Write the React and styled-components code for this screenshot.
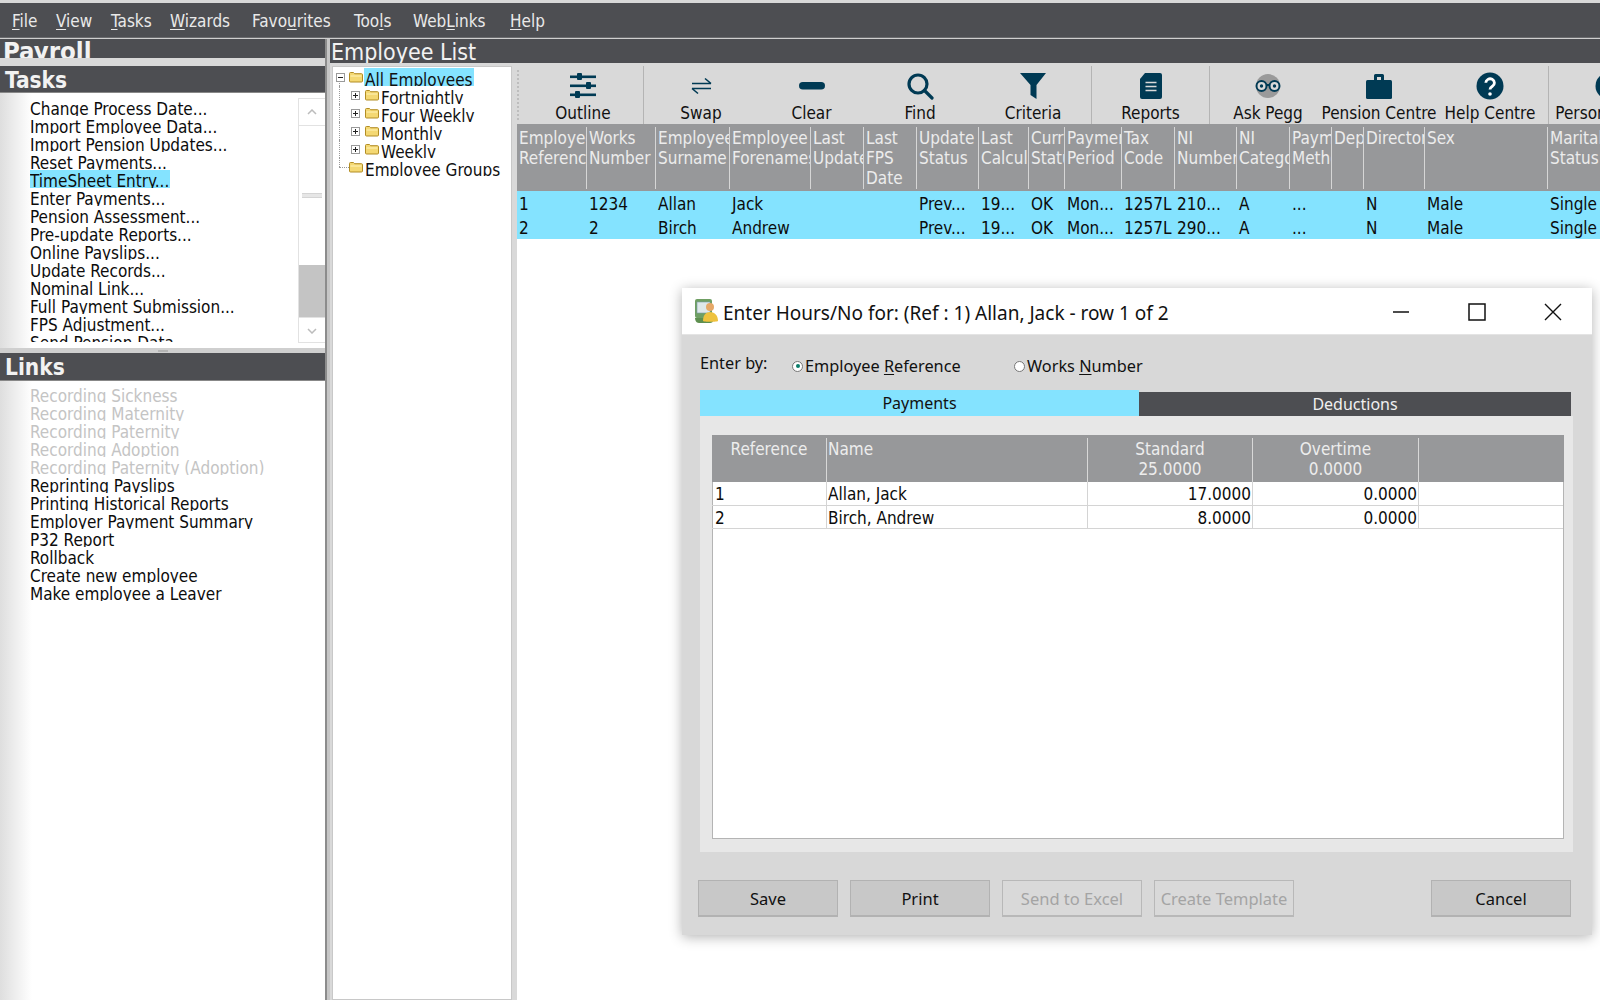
import React from "react";
import styled, { createGlobalStyle } from "styled-components";

const ink = "#003a54";
const dark = "#4d4e52";
const cyan = "#84e3ff";
const head = "#97989a";
const tahoma = `"DejaVu Sans Condensed", "DejaVu Sans", sans-serif`;
const segoe = `"Noto Sans", "Open Sans", sans-serif`;

const Global = createGlobalStyle`
  html, body { margin: 0; padding: 0; background: #fff; }
  * { box-sizing: border-box; }
  #root { width: 1600px; height: 1000px; overflow: hidden; }
`;

const Page = styled.div`
  position: relative; width: 1600px; height: 1000px; overflow: hidden;
  display: flex; flex-direction: column;
  font-family: ${tahoma}; font-size: 17px; color: #111; padding-top: 3px;
  background-color: #d8d8d8;
`;
const MenuBar = styled.div`
  height: 35px; flex: none; background: ${dark}; position: relative; padding-top: 1px;
  border-bottom: 1px solid #6a6b6e; color: #e9e9e9; display: flex; align-items: center;
`;
const MenuItem = styled.span`
  width: ${p => p.$w}px; font-size: 17px; white-space: nowrap;
  &:first-child { margin-left: 12px; }
  u { text-underline-offset: 2px; text-decoration-thickness: 1px; }
`;
const Main = styled.div`
  flex: 1; display: flex; min-height: 0; padding-top: 1px; background: #cfcfcf;
`;
const Sidebar = styled.div`
  width: 325px; flex: none; display: flex; flex-direction: column; min-height: 0;
`;
const TitleBar = styled.div`
  height: 19px; flex: none; background: ${dark}; color: #f2f2f2; overflow: hidden;
  font: bold 25.5px/24px ${tahoma}; padding-left: 3px;
`;
const Band = styled.div`height: 8px; flex: none; background: #d9d9d9;`;
const SectionHead = styled.div`
  height: ${p => p.$h}px; flex: none; background: ${dark}; color: #f2f2f2;
  font: bold 22.5px/29px ${tahoma}; padding-left: 5px; border-bottom: 1px solid #888; overflow: hidden;
`;
const ListWrap = styled.div`
  flex: ${p => (p.$grow ? 1 : "none")}; height: ${p => (p.$grow ? "auto" : "255px")};
  background: linear-gradient(90deg, #dedede, #fff 32px); display: flex; padding-top: ${p => p.$pt}px; min-height: 0;
`;
const List = styled.div`
  flex: 1; padding-left: 30px; height: ${p => p.$h}px; overflow: hidden;
`;
const Row = styled.div`
  height: 18px; overflow: hidden; font-size: 17px; line-height: 22px; white-space: nowrap;
  color: ${p => (p.$off ? "#c4c4c4" : "#0c0c0c")};
  span { display: inline-block; padding: 0 1px; background: ${p => (p.$on ? cyan : "transparent")}; margin-left: -1px; }
`;
const Scrollbar = styled.div`
  width: 27px; flex: none; height: 245px; border: 1px solid #e2e2e2; border-right: 0;
  display: flex; flex-direction: column; background: #fff;
`;
const ScrollBtn = styled.div`
  height: 27px; flex: none; display: flex; align-items: center; justify-content: center;
  border-bottom: ${p => (p.$top ? "1px solid #e2e2e2" : "0")};
  border-top: ${p => (p.$top ? "0" : "1px solid #e2e2e2")};
`;
const ScrollTrack = styled.div`flex: 1; display: flex; flex-direction: column; align-items: center;`;
const Grip = styled.div`
  width: 20px; height: 5px; margin-top: 67px; border-top: 1px solid #d4d4d4; border-bottom: 1px solid #d4d4d4; background: #e6e6e6;
`;
const Thumb = styled.div`
  width: 100%; height: 52px; margin-top: 67px; background: #c4c4c4;
`;
const HSplit = styled.div`
  height: 5px; flex: none; background: #cfcfcf; display: flex; justify-content: center; align-items: center;
`;
const HGrip = styled.i`width: 10px; height: 2px; background: #b4b4b4;`;
const VSplit = styled.div`
  width: 5px; flex: none; background: #c6c6c6; border-left: 2px solid #8c8c8c;
`;
const Content = styled.div`
  flex: 1; display: flex; flex-direction: column; min-width: 0; background: #d9d9d9;
`;
const ContentHead = styled.div`
  height: 24px; flex: none; background: ${dark}; color: #f2f2f2; overflow: hidden;
  font-size: 23px; line-height: 26px; padding-left: 1px; margin-bottom: 3px;
`;
const Body = styled.div`flex: 1; display: flex; min-height: 0; padding-left: 2px;`;
const Tree = styled.div`
  width: 180px; flex: none; background: #fff; border: 1px solid #c8c8c8; padding-top: 1px;
`;
const TreeRow = styled.div`
  height: 18px; display: flex; align-items: stretch; overflow: hidden; padding-left: ${p => p.$indent}px;
  position: relative;
  &::before {
    content: ""; position: absolute; left: 6px; top: ${p => (p.$first ? "9px" : "0")}; bottom: ${p => (p.$last ? "9px" : "0")};
    border-left: 1px dotted #9a9a9a;
  }
  &::after {
    content: ""; display: ${p => (p.$last ? "block" : "none")}; position: absolute; left: 6px; width: 10px; top: 9px;
    border-top: 1px dotted #9a9a9a;
  }
`;
const Expander = styled.svg`
  width: 9px; height: 9px; flex: none; align-self: center; margin-right: ${p => p.$gap}px; position: relative; z-index: 1;
`;
const FolderIcon = styled.svg`width: 14px; height: 12px; flex: none; align-self: center; position: relative; z-index: 1; margin-right: 1px;`;
const TreeLabel = styled.div`
  font-size: 17px; line-height: 24px; padding: 0 1px; height: 18px; overflow: hidden; white-space: nowrap;
  background: ${p => (p.$on ? cyan : "transparent")};
`;
const Work = styled.div`
  flex: 1; min-width: 0; margin-left: 5px; background: #fff; display: flex; flex-direction: column; overflow: hidden;
`;
const Toolbar = styled.div`
  height: 58px; flex: none; display: flex; background: #d9d9d9; overflow: hidden;
`;
const ToolGrip = styled.div`
  width: 6px; flex: none; margin: 4px 0; border-left: 2px dotted #bdbdbd;
`;
const ToolBtn = styled.div`
  width: ${p => p.$w}px; flex: none; display: flex; flex-direction: column; align-items: center;
  padding-top: 5px; white-space: nowrap; border-right: ${p => (p.$sep ? "1px solid #b4b4b4" : "0")};
`;
const ToolIcon = styled.div`height: 30px; display: flex; align-items: center; justify-content: center; color: ${ink};`;
const ToolLabel = styled.div`font-size: 17px; line-height: 20px; color: #111; margin-top: 2px;`;
const GridHead = styled.div`
  height: 67px; flex: none; display: flex; background: ${head}; color: #ececec; padding-top: 3px;
`;
const HCell = styled.div`
  width: ${p => p.$w}px; flex: none; height: 62px; overflow: hidden; white-space: pre; font-size: 17px; line-height: 20px;
  padding: 1px 0 0 2px; border-right: 1px solid #d6d6d6;
`;
const DataRow = styled.div`
  height: 24px; flex: none; display: flex; background: ${cyan}; color: #0c0c0c;
`;
const DCell = styled.div`
  width: ${p => p.$w}px; flex: none; overflow: hidden; white-space: nowrap; font-size: 17px; line-height: 24px; padding: 1px 0 0 2px;
`;

/* dialog */
const Dialog = styled.div`
  position: absolute; left: 682px; top: 288px; width: 910px; height: 647px; background: #d8d8d8;
  box-shadow: 0 2px 12px rgba(0,0,0,.3); display: flex; flex-direction: column; font-family: ${segoe};
`;
const DTitle = styled.div`
  height: 47px; flex: none; background: #fff; display: flex; align-items: center; padding-left: 12px;
  font-size: 19px; color: #111; border-bottom: 1px solid #e4e4e4;
`;
const DTitleText = styled.div`flex: 1; margin: 3px 0 0 4px; white-space: nowrap;`;
const WinBtn = styled.svg`width: 18px; height: 18px; flex: none; margin-right: ${p => p.$m}px; margin-top: 1px;`;
const DBody = styled.div`flex: 1; display: flex; flex-direction: column; padding: 0 19px 0 18px; min-height: 0;`;
const EnterRow = styled.div`height: 55px; flex: none; display: flex; align-items: center; font-size: 16.3px; padding-top: 6px;`;
const EnterLabel = styled.div`width: 92px; margin-top: -5px;`;
const Radio = styled.label`
  width: ${p => p.$w}px; display: flex; align-items: center; margin-top: 1px; white-space: nowrap;
  u { text-underline-offset: 2px; text-decoration-thickness: 1px; }
`;
const RadioDot = styled.i`
  width: 11px; height: 11px; border-radius: 50%; border: 1px solid #777; background: #fff; display: block; margin-right: 2px; flex: none; position: relative;
  &::after { content: ""; display: ${p => (p.$on ? "block" : "none")}; position: absolute; left: 2.5px; top: 2.5px; width: 4px; height: 4px; border-radius: 50%; background: #0a7d6a; }
`;
const Tabs = styled.div`height: 26px; flex: none; display: flex; align-items: flex-end; width: 871px;`;
const Tab = styled.div`
  flex: ${p => (p.$on ? "0 0 439px" : 1)}; height: ${p => (p.$on ? 26 : 24)}px; background: ${p => (p.$on ? cyan : dark)};
  color: ${p => (p.$on ? "#111" : "#f0f0f0")}; display: flex; align-items: center; justify-content: center; font-size: 16px;
`;
const TabPanel = styled.div`
  height: 436px; flex: none; width: 873px; background: #e7e7e7; padding: 19px 9px 13px 12px;
`;
const Sheet = styled.div`
  height: 100%; background: #fff; border: 1px solid #b4b4b4; border-top: 0; display: flex; flex-direction: column;
`;
const SheetHead = styled.div`
  height: 47px; flex: none; background: ${head}; color: #ededed; display: flex; padding-top: 3px; margin: 0 -1px;
`;
const SheetH = styled.div`
  width: ${p => p.$w}px; flex: none; height: 44px; text-align: ${p => p.$a}; font-size: 17px; line-height: 20px; white-space: pre;
  padding: 1px 2px 0 ${p => p.$pl}px; border-right: ${p => (p.$last ? "0" : "1px solid #d8d8d8")};
  font-family: ${tahoma};
`;
const SheetRow = styled.div`
  height: 23.5px; flex: none; display: flex; border-bottom: 1px solid #d4d4d4; margin-left: -1px;
`;
const SheetC = styled.div`
  width: ${p => p.$w}px; flex: none; text-align: ${p => p.$a}; font: 17px/23px ${tahoma}; padding: 1px 1px 0 ${p => p.$pl}px; color: #0c0c0c;
  border-right: ${p => (p.$last ? "0" : "1px solid #d4d4d4")};
`;
const Footer = styled.div`flex: 1; display: flex; padding-top: 28px; margin-left: -2px;`;
const DButton = styled.div`
  width: 140px; height: 37px; margin-right: ${p => p.$m}px; display: flex; align-items: center; justify-content: center; font-size: 16.5px;
  background: ${p => (p.$off ? "#d9d9d9" : "#c8c8c8")}; color: ${p => (p.$off ? "#a4a4a4" : "#111")};
  border: 1px solid ${p => (p.$off ? "#b8b8b8" : "#b2b2b2")}; border-bottom-width: 2px; flex: none;
`;

const menus = [[44, "F", "ile"], [55, "V", "iew"], [59, "T", "asks"], [82, "W", "izards"], [102, "Favo", "u", "rites"], [59, "Too", "l", "s"], [97, "Web", "L", "inks"], [50, "H", "elp"]];
const tasks = ["Change Process Date...", "Import Employee Data...", "Import Pension Updates...", "Reset Payments...", "TimeSheet Entry...", "Enter Payments...", "Pension Assessment...", "Pre-update Reports...", "Online Payslips...", "Update Records...", "Nominal Link...", "Full Payment Submission...", "FPS Adjustment...", "Send Pension Data"];
const links = [["Recording Sickness", 1], ["Recording Maternity", 1], ["Recording Paternity", 1], ["Recording Adoption", 1], ["Recording Paternity (Adoption)", 1], ["Reprinting Payslips"], ["Printing Historical Reports"], ["Employer Payment Summary"], ["P32 Report"], ["Rollback"], ["Create new employee"], ["Make employee a Leaver"]];

const cols = [
  [70, "Employee\nReference", "1", "2"], [69, "Works\nNumber", "1234", "2"], [74, "Employee\nSurname", "Allan", "Birch"], [81, "Employee\nForenames", "Jack", "Andrew"],
  [53, "Last\nUpdate", "", ""], [53, "Last\nFPS\nDate", "", ""], [62, "Update\nStatus", "Prev...", "Prev..."], [50, "Last\nCalcul", "19...", "19..."],
  [36, "Curr\nStatus", "OK", "OK"], [57, "Payment\nPeriod", "Mon...", "Mon..."], [53, "Tax\nCode", "1257L", "1257L"], [62, "NI\nNumber", "210...", "290..."],
  [53, "NI\nCategory", "A", "A"], [42, "Paym\nMethod", "...", "..."], [32, "Dept", "", ""], [61, "Director", "N", "N"], [123, "Sex", "Male", "Male"], [60, "Marital\nStatus", "Single", "Single"],
];

const Sliders = () => (
  <svg width="28" height="28" viewBox="0 0 28 28" fill="currentColor">
    <rect x="1" y="3.5" width="26" height="2.6" /><rect x="1" y="12.5" width="26" height="2.6" /><rect x="1" y="21.5" width="26" height="2.6" />
    <rect x="8" y="1" width="5" height="7" rx="1" /><rect x="17" y="10" width="5" height="7" rx="1" /><rect x="6" y="19" width="5" height="7" rx="1" />
  </svg>
);
const Swap = () => (
  <svg width="21" height="18" viewBox="0 0 21 18" fill="none" stroke="currentColor" strokeWidth="1.6">
    <path d="M1 6.5h19M14 1.5l6 5" /><path d="M20 11.5H1M7 16.5l-6-5" />
  </svg>
);
const Pill = () => (
  <svg width="28" height="10" viewBox="0 0 28 10" fill="currentColor"><rect x="1" y="1" width="26" height="7.5" rx="3.75" /></svg>
);
const Find = () => (
  <svg width="28" height="28" viewBox="0 0 28 28" fill="none" stroke="currentColor" strokeWidth="3.2">
    <circle cx="12" cy="12" r="9" /><path d="M18.5 18.5L26 26" strokeLinecap="round" />
  </svg>
);
const Funnel = () => (
  <svg width="28" height="28" viewBox="0 0 28 28" fill="currentColor"><path d="M1 1h26L17.5 13v14l-6-4V13z" /></svg>
);
const Doc = () => (
  <svg width="24" height="28" viewBox="0 0 24 28"><path d="M6 1h15a2 2 0 0 1 2 2v22a2 2 0 0 1-2 2H3a2 2 0 0 1-2-2V7z" fill="currentColor" />
    <path d="M6.5 10.5h11M6.5 14.5h11M6.5 18.5h11" stroke="#d9d9d9" strokeWidth="1.6" /></svg>
);
const Glasses = () => (
  <svg width="28" height="28" viewBox="0 0 28 28" fill="none"><circle cx="14" cy="14" r="12" fill="#9a9a9a" />
    <circle cx="7.5" cy="14" r="5" fill="#d9d9d9" stroke="currentColor" strokeWidth="2" /><circle cx="20.5" cy="14" r="5" fill="#d9d9d9" stroke="currentColor" strokeWidth="2" />
    <circle cx="7.5" cy="14" r="1.7" fill="currentColor" /><circle cx="20.5" cy="14" r="1.7" fill="currentColor" /><path d="M12 13h4" stroke="currentColor" strokeWidth="2" /></svg>
);
const Case = () => (
  <svg width="28" height="28" viewBox="0 0 28 28" fill="currentColor"><rect x="1" y="8" width="26" height="19" rx="1.5" /><path d="M9 9V3.5A1.5 1.5 0 0 1 10.5 2h7A1.5 1.5 0 0 1 19 3.5V9h-3V5h-4v4z" /></svg>
);
const Help = () => (
  <svg width="28" height="28" viewBox="0 0 28 28"><circle cx="14" cy="14" r="13.5" fill="currentColor" />
    <path d="M9.8 10.8a4.3 4 0 1 1 6.6 3.4c-1.6 1-2.4 1.6-2.4 3.4" fill="none" stroke="#fff" strokeWidth="2.8" /><circle cx="14" cy="22" r="1.8" fill="#fff" /></svg>
);
const Person = () => (
  <svg width="28" height="28" viewBox="0 0 28 28"><circle cx="14" cy="14" r="13.5" fill="currentColor" /></svg>
);
const tools = [
  ["Outline", 121, 1, <Sliders key="a" />], ["Swap", 114, 0, <Swap key="b" />], ["Clear", 107, 0, <Pill key="c" />], ["Find", 110, 0, <Find key="d" />], ["Criteria", 117, 1, <Funnel key="e" />],
  ["Reports", 118, 1, <Doc key="f" />], ["Ask Pegg", 116, 0, <Glasses key="g" />], ["Pension Centre", 106, 0, <Case key="h" />], ["Help Centre", 117, 1, <Help key="i" />], ["Person Centre", 120, 0, <Person key="j" />],
];

const Folder = () => (
  <FolderIcon viewBox="0 0 14 12">
    <path d="M.5 2.5a1 1 0 0 1 1-1h3l1.2 1.2h6.8a1 1 0 0 1 1 1V10a1 1 0 0 1-1 1h-11a1 1 0 0 1-1-1z" fill="#f4d873" stroke="#b28d24" />
    <path d="M1.5 5h11" stroke="#fff3b8" />
  </FolderIcon>
);
const Exp = ({ minus, gap }) => (
  <Expander viewBox="0 0 9 9" $gap={gap}>
    <rect x=".5" y=".5" width="8" height="8" fill="#fff" stroke="#9a9a9a" />
    <path d={minus ? "M2 4.5h5" : "M2 4.5h5M4.5 2v5"} stroke="#222" />
  </Expander>
);

const sheetCols = [[115, "center", "Reference", 2], [261, "left", "Name", 1], [165, "center", "Standard\n25.0000", 2], [166, "center", "Overtime\n0.0000", 2], [145, "center", "", 2]];

export default function App() {
  return (
    <Page>
      <Global />
      <MenuBar>
        {menus.map(([w, a, b, c]) => (
          <MenuItem key={a + b} $w={w}>
            {c ? <>{a}<u>{b}</u>{c}</> : <><u>{a}</u>{b}</>}
          </MenuItem>
        ))}
      </MenuBar>
      <Main>
        <Sidebar>
          <TitleBar>Payroll</TitleBar>
          <Band />
          <SectionHead $h={27}>Tasks</SectionHead>
          <ListWrap $pt={5}>
            <List $h={244}>
              {tasks.map((t, i) => <Row key={t} $on={i === 4}><span>{t}</span></Row>)}
            </List>
            <Scrollbar>
              <ScrollBtn $top><svg width="10" height="6" viewBox="0 0 10 6" fill="none" stroke="#bcbcbc" strokeWidth="1.5"><path d="M1 5l4-4 4 4" /></svg></ScrollBtn>
              <ScrollTrack><Grip /><Thumb /></ScrollTrack>
              <ScrollBtn><svg width="10" height="6" viewBox="0 0 10 6" fill="none" stroke="#bcbcbc" strokeWidth="1.5"><path d="M1 1l4 4 4-4" /></svg></ScrollBtn>
            </Scrollbar>
          </ListWrap>
          <HSplit><HGrip /></HSplit>
          <SectionHead $h={28}>Links</SectionHead>
          <ListWrap $grow $pt={4}>
            <List $h={400}>
              {links.map(([t, off]) => <Row key={t} $off={off}><span>{t}</span></Row>)}
            </List>
          </ListWrap>
        </Sidebar>
        <VSplit />
        <Content>
          <ContentHead>Employee List</ContentHead>
          <Body>
            <Tree>
              <TreeRow $indent={3} $first><Exp minus gap={4} /><Folder /><TreeLabel $on>All Employees</TreeLabel></TreeRow>
              {["Fortnightly", "Four Weekly", "Monthly", "Weekly"].map(t => (
                <TreeRow key={t} $indent={18}><Exp gap={5} /><Folder /><TreeLabel>{t}</TreeLabel></TreeRow>
              ))}
              <TreeRow $indent={16} $last><Folder /><TreeLabel>Employee Groups</TreeLabel></TreeRow>
            </Tree>
            <Work>
              <Toolbar>
                <ToolGrip />
                {tools.map(([label, w, sep, icon]) => (
                  <ToolBtn key={label} $w={w} $sep={sep}>
                    <ToolIcon>{icon}</ToolIcon>
                    <ToolLabel>{label}</ToolLabel>
                  </ToolBtn>
                ))}
              </Toolbar>
              <GridHead>
                {cols.map(([w, h]) => <HCell key={h} $w={w}>{h}</HCell>)}
              </GridHead>
              {[2, 3].map(k => (
                <DataRow key={k}>
                  {cols.map(c => <DCell key={c[1]} $w={c[0]}>{c[k]}</DCell>)}
                </DataRow>
              ))}
            </Work>
          </Body>
        </Content>
      </Main>

      <Dialog>
        <DTitle>
          <svg width="25" height="26" viewBox="0 0 25 26">
            <rect x="1" y="1" width="17" height="19" rx="2" fill="#6f9f63" />
            <rect x="3" y="4" width="13" height="11" fill="#dfe8ea" stroke="#7a9aa8" strokeWidth=".6" />
            <path d="M1 20h17c2 0 2 5-2 5H5c-4 0-4-5-4-5z" fill="#5e8f4f" />
            <circle cx="16" cy="9" r="4" fill="#e6a868" />
            <path d="M9 23c0-6 3-9 7-9s8 3 8 9c0 1-15 1-15 0z" fill="#eec23e" />
          </svg>
          <DTitleText>Enter Hours/No for: (Ref : 1) Allan, Jack - row 1 of 2</DTitleText>
          <WinBtn viewBox="0 0 18 18" $m={58} fill="none" stroke="#111" strokeWidth="1.5"><path d="M1 9h16" /></WinBtn>
          <WinBtn viewBox="0 0 18 18" $m={58} fill="none" stroke="#111" strokeWidth="1.5"><rect x="1" y="1" width="16" height="16" /></WinBtn>
          <WinBtn viewBox="0 0 18 18" $m={30} fill="none" stroke="#111" strokeWidth="1.4"><path d="M1 1l16 16M17 1L1 17" /></WinBtn>
        </DTitle>
        <DBody>
          <EnterRow>
            <EnterLabel>Enter by:</EnterLabel>
            <Radio $w={222}><RadioDot $on />Employee&nbsp;<u>R</u>eference</Radio>
            <Radio $w={160}><RadioDot />Works&nbsp;<u>N</u>umber</Radio>
          </EnterRow>
          <Tabs>
            <Tab $on>Payments</Tab>
            <Tab>Deductions</Tab>
          </Tabs>
          <TabPanel>
            <Sheet>
              <SheetHead>
                {sheetCols.map(([w, a, h, pl], i) => <SheetH key={i} $w={w} $a={a} $pl={pl} $last={i === 4}>{h}</SheetH>)}
              </SheetHead>
              {[["1", "Allan, Jack", "17.0000", "0.0000"], ["2", "Birch, Andrew", "8.0000", "0.0000"]].map(r => (
                <SheetRow key={r[0]}>
                  <SheetC $w={115} $a="left" $pl={3}>{r[0]}</SheetC>
                  <SheetC $w={261} $a="left" $pl={1}>{r[1]}</SheetC>
                  <SheetC $w={165} $a="right" $pl={1}>{r[2]}</SheetC>
                  <SheetC $w={166} $a="right" $pl={1}>{r[3]}</SheetC>
                  <SheetC $w={145} $a="right" $pl={1} $last />
                </SheetRow>
              ))}
            </Sheet>
          </TabPanel>
          <Footer>
            <DButton $m={12}>Save</DButton>
            <DButton $m={12}>Print</DButton>
            <DButton $m={12} $off>Send to Excel</DButton>
            <DButton $m={137} $off>Create Template</DButton>
            <DButton $m={0}>Cancel</DButton>
          </Footer>
        </DBody>
      </Dialog>
    </Page>
  );
}
